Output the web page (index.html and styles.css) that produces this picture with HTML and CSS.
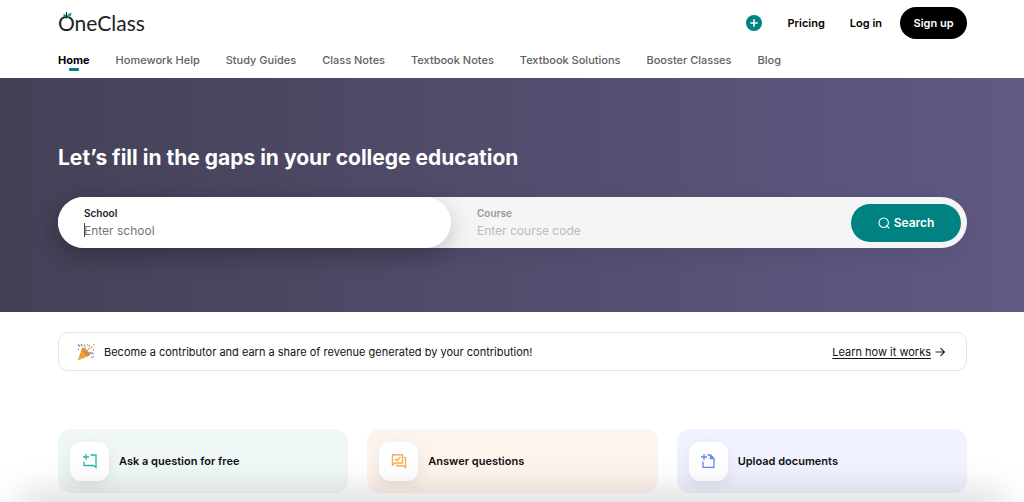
FILE: index.html
```html
<!DOCTYPE html>
<html lang="en">
<head>
  <meta charset="UTF-8" />
  <meta name="viewport" content="width=device-width, initial-scale=1.0"/>
  <title>OneClass</title>
  <link rel="stylesheet" href="styles.css">
</head>
<body>

  <header class="container">
    <div class="topbar">
      <a href="#" class="logo">
        <svg class="leaf" width="9" height="7" viewBox="0 0 9 7">
          <path d="M0 2.500C2 2 3.500 3 4 5C2 5.200 .7 4.300 0 2.500Z" fill="#158a88"/>
          <path d="M4 5.500C4 2.800 5.500 1 8.500 .8C8.500 3.800 7 5.500 4 5.500Z" fill="#12a5a0"/>
          <path d="M3.500 0V6.500" stroke="#1b2a2e" stroke-width="1.200"/>
        </svg>
        OneClass
      </a>
      <div class="account">
        <button class="add" aria-label="Add">
          <svg width="8" height="8" viewBox="0 0 8 8" fill="none" stroke="#fff" stroke-width="1.500" stroke-linecap="round"><path d="M4 .8v6.400M.8 4h6.400"/></svg>
        </button>
        <a href="#">Pricing</a>
        <a href="#">Log in</a>
        <button class="signup">Sign up</button>
      </div>
    </div>
    <nav>
      <a href="#" class="active">Home</a>
      <a href="#">Homework Help</a>
      <a href="#">Study Guides</a>
      <a href="#">Class Notes</a>
      <a href="#">Textbook Notes</a>
      <a href="#">Textbook Solutions</a>
      <a href="#">Booster Classes</a>
      <a href="#">Blog</a>
    </nav>
  </header>

  <section class="hero">
    <div class="container">
      <h1>Let’s fill in the gaps in your college education</h1>
      <form class="search">
        <div class="field focused">
          <label for="school">School</label>
          <input type="text" id="school" placeholder="Enter school">
        </div>
        <div class="field">
          <label for="course">Course</label>
          <input type="text" id="course" placeholder="Enter course code">
        </div>
        <button type="button" class="search-btn">
          <svg width="12" height="12" viewBox="0 0 12 12" fill="none" stroke="#fff" stroke-width="1.100" stroke-linecap="round"><circle cx="5.700" cy="5.700" r="4.700"/><path d="M8.300 8.500l2.700 2.500"/></svg>
          Search
        </button>
      </form>
    </div>
  </section>

  <main class="container">
    <div class="banner">
      <svg width="18" height="18" viewBox="0 0 18 18" fill="none">
        <path d="M1 16.500L5 5Q10 7 12.500 12.500L2 17Q1 17.300 1 16.500Z" fill="#f0a63c"/>
        <path d="M3 11l4.500 4M4 7.500l6.500 6" stroke="#d9902f"/>
        <ellipse cx="9" cy="8.700" rx="1.900" ry="5" transform="rotate(-44 9 8.700)" fill="#d08a3a"/>
        <path d="M7.500 8Q9 4 7 1M10 9Q11 5 14 5Q15.500 5 15 3" stroke="#e8aa68" stroke-width="1.200"/>
        <path d="M1 1.500l2 2M4 1l1.500 2.500M12 10.500Q14 9 16.500 11" stroke="#5487d8" stroke-width="1.200"/>
        <path d="M10 1.500l1 1M16 7l1-.5M14 14l1.500 1M16.500 1l.5 1" stroke="#df8d82" stroke-width="1.400"/>
        <path d="M1 6l1 1M12.500 2l-.5 1.500M16 13.500l1 .5" stroke="#6b9be2" stroke-width="1.200"/>
      </svg>
      <p>Become a contributor and earn a share of revenue generated by your contribution!</p>
      <a href="#">Learn how it works</a>
      <svg width="10" height="10" viewBox="0 0 10 10" fill="none" stroke="#222" stroke-width="1.200"><path d="M.5 5h8.500M5.500 1.200L9.300 5 5.500 8.800"/></svg>
    </div>

    <div class="cards">
      <a href="#" class="card ask">
        <span class="icon">
          <svg width="16" height="16" viewBox="0 0 16 16" fill="none" stroke="#2bb3a3" stroke-width="1.300"><path d="M4 1v6M1 4h6M8.500 2H14v12.500L11.500 12.500H2V8.500"/></svg>
        </span>
        Ask a question for free
      </a>
      <a href="#" class="card answer">
        <span class="icon">
          <svg width="16" height="16" viewBox="0 0 16 16" fill="none" stroke="#fbab55" stroke-width="1.400"><path d="M1.500 1.700h10v8.300H4L1.500 12ZM4 5.700l2 2 3.500-3.700M13 4.500h1.500V14.500L12.500 12.700H6V11.500"/></svg>
        </span>
        Answer questions
      </a>
      <a href="#" class="card upload">
        <span class="icon">
          <svg width="16" height="16" viewBox="0 0 16 16" fill="none" stroke="#6386f5" stroke-width="1.300"><path d="M4 1v6M1 4h6M7.500 2H10.500L14 5.500V14.300H3V8.500"/><path d="M9.800 1.500L14.500 6.200H9.800Z" fill="#6386f5" stroke="none"/></svg>
        </span>
        Upload documents
      </a>
    </div>
  </main>

  <div class="bottom-shade"></div>

</body>
</html>
```
FILE: styles.css
```css
* { box-sizing: border-box; }
body {
  margin: 0;
  background: white;
  color: #111;
  font-family: Inter, "Liberation Sans", sans-serif;
  font-size: 11px;
  line-height: 16px;
  overflow: hidden;
}
a { color: inherit; text-decoration: none; }
button { font: inherit; border: none; cursor: pointer; padding: 0; }
svg { display: block; flex: none; }
.container { padding: 0 57px 0 58px; }

.topbar {
  display: flex; justify-content: space-between; align-items: center;
  height: 46px;
}
.logo {
  position: relative;
  font-family: Lato, sans-serif; font-weight: 400;
  color: #222; font-size: 21px; line-height: 24px;
}
.leaf { position: absolute; top: 1px; left: 5px; }
.account {
  display: flex; align-items: center; gap: 25px;
  color: #000; font-weight: 600;
}
.add {
  display: flex; align-items: center; justify-content: center;
  width: 16px; height: 16px;
  border-radius: 50%; background: #008282;
}
.signup {
  width: 67px; height: 32px; margin-left: -7px;
  border-radius: 16px; background: #000; color: white;
}
nav { display: flex; gap: 26px; padding-top: 6px; height: 32px; color: #616161; font-weight: 500; }
nav a { height: 20px; }
nav .active { color: #000; font-weight: 700; }
nav .active::after {
  content: ""; display: block;
  width: 10px; height: 3px; margin: 0 auto;
  border-radius: 1px; background: #008282;
}

.hero {
  padding: 64px 0;
  background: linear-gradient(to right, #434056, #605a84);
}
h1 {
  margin: 0 0 23px;
  color: white; font-size: 21px; font-weight: 700; line-height: 32px;
}
.search {
  display: flex; align-items: center;
  height: 51px; padding-right: 6px;
  border-radius: 26px; background: #f5f5f5;
  box-shadow: 0 6px 20px rgba(0, 0, 0, 0.08);
}
.field {
  flex: 1; height: 51px; padding: 8px 26px;
  display: flex; flex-direction: column;
  border-radius: 26px; color: #999;
}
.field label { font-size: 10px; font-weight: 600; }
.field input {
  width: 100%; height: 18px; padding: 0;
  border: none; outline: none; background: none;
  color: #222; font: inherit; font-size: 12px;
}
.field input::placeholder { color: #bbb; }
.focused { background: white; color: #222; box-shadow: 0 8px 24px rgba(0, 0, 0, 0.2); }
.focused input { background: linear-gradient(#444, #444) no-repeat left / 1px 14px; }
.focused input::placeholder { color: #757575; }
.search-btn {
  display: flex; align-items: center; justify-content: center; gap: 4px;
  width: 110px; height: 38px; margin-left: 7px;
  border-radius: 19px; background: #008282;
  color: white; font-size: 12px; font-weight: 600;
}

.banner {
  display: flex; align-items: center;
  height: 39px; margin-top: 20px; padding: 0 21px 0 18px;
  border: 1px solid #e4e4e4; border-radius: 10px;
}
.banner p { flex: 1; margin: 0 0 0 9px; }
.banner a { margin-right: 4px; text-decoration: underline; text-underline-offset: 2px; }

.cards {
  display: grid; grid-template-columns: repeat(3, 1fr); gap: 19px;
  margin-top: 58px;
}
.card {
  display: flex; align-items: center; gap: 10px;
  height: 64px; padding: 0 12px;
  border-radius: 13px; font-weight: 600;
}
.ask { background: #eff8f7; }
.answer { background: #fef4ee; }
.upload { background: #f0f2ff; }
.icon {
  display: flex; align-items: center; justify-content: center;
  width: 39px; height: 39px;
  border-radius: 11px; background: white;
  box-shadow: 0 5px 16px rgba(0, 0, 0, 0.08);
}

/* shadow cast up from below the fold */
.bottom-shade {
  position: fixed; left: 24px; right: 24px; bottom: -10px;
  height: 10px;
  box-shadow: 0 0 36px 4px rgba(0, 0, 0, 0.26);
}
```
